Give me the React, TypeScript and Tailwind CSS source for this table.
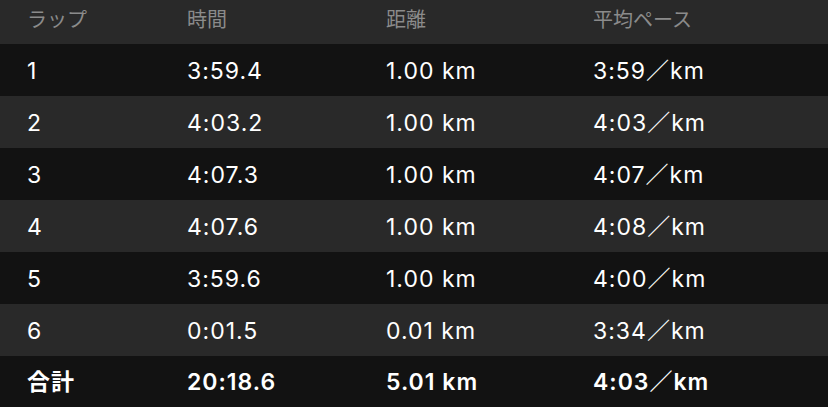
import React from "react";

type Lap = { lap: string; time: string; dist: string; pace: string };

const laps: Lap[] = [
  { lap: "1", time: "3:59.4", dist: "1.00 km", pace: "3:59／km" },
  { lap: "2", time: "4:03.2", dist: "1.00 km", pace: "4:03／km" },
  { lap: "3", time: "4:07.3", dist: "1.00 km", pace: "4:07／km" },
  { lap: "4", time: "4:07.6", dist: "1.00 km", pace: "4:08／km" },
  { lap: "5", time: "3:59.6", dist: "1.00 km", pace: "4:00／km" },
  { lap: "6", time: "0:01.5", dist: "0.01 km", pace: "3:34／km" },
];

const font = { fontFamily: 'Inter, "Noto Sans CJK JP", sans-serif' };

function Row({ cells, className, textClass }: { cells: string[]; className: string; textClass: string }) {
  return (
    <div className={`flex items-center pl-[27px] ${className}`}>
      <div className={`w-[160px] ${textClass}`}>{cells[0]}</div>
      <div className={`w-[199px] ${textClass}`}>{cells[1]}</div>
      <div className={`w-[207px] ${textClass}`}>{cells[2]}</div>
      <div className={`${textClass}`}>{cells[3]}</div>
    </div>
  );
}

export default function App() {
  return (
    <div className="w-[828px] h-[407px] bg-[#121212] overflow-hidden" style={font}>
      <Row
        cells={["ラップ", "時間", "距離", "平均ペース"]}
        className="h-[44px] bg-[#292929] pb-[4px]"
        textClass="text-[20px] text-[#8b8b8b]"
      />
      {laps.map((l, i) => (
        <Row
          key={l.lap}
          cells={[l.lap, l.time, l.dist, l.pace]}
          className={`h-[52px] pt-[2px] ${i % 2 === 0 ? "bg-[#121212]" : "bg-[#292929]"}`}
          textClass="text-[23px] tracking-[1px] text-white"
        />
      ))}
      <Row
        cells={["合計", "20:18.6", "5.01 km", "4:03／km"]}
        className="h-[51px] pt-[2px] bg-[#121212]"
        textClass="text-[23px] tracking-[1px] text-white font-semibold"
      />
    </div>
  );
}
